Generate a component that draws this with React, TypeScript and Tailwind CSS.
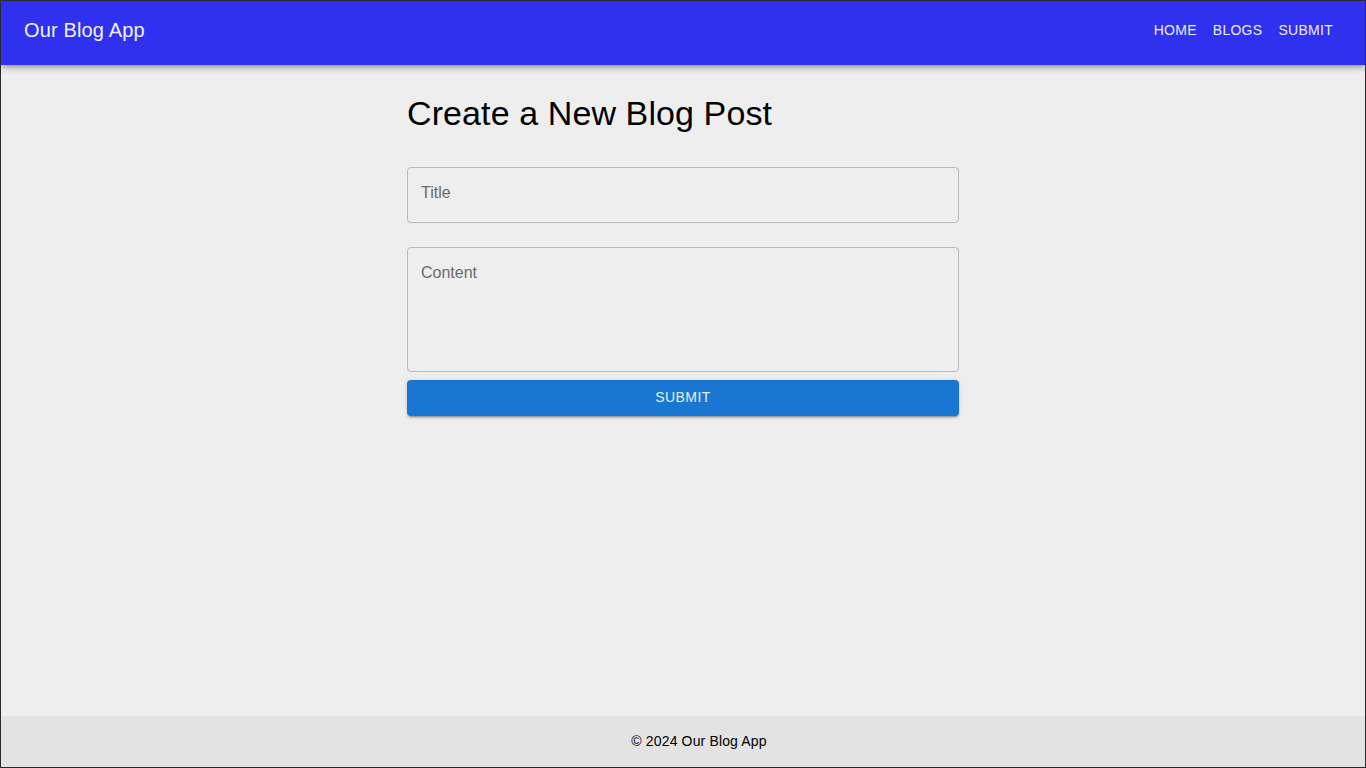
const navItems = ["Home", "Blogs", "Submit"];

const Header = () => {
  return (
    <header className="relative z-10 h-16 shrink-0 bg-[#3030ef] text-white shadow-[0_2px_4px_-1px_rgba(0,0,0,0.2),0_4px_5px_0_rgba(0,0,0,0.14),0_1px_10px_0_rgba(0,0,0,0.12)]">
      <nav className="flex h-full items-center justify-between pl-[23px] pr-6 pb-[6px]">
        <span className="text-[20px] leading-[32px] tracking-[0.0075em] text-[#f0f0ff]">Our Blog App</span>
        <ul className="flex items-center">
          {navItems.map((item) => (
            <li key={item}>
              <a href="#" className="block rounded px-2 py-[6px] text-[14px] leading-[24px] uppercase tracking-[0.02em] text-[#ececff]">
                {item}
              </a>
            </li>
          ))}
        </ul>
      </nav>
    </header>
  );
};

const NewPostForm = () => {
  return (
    <main className="flex-1">
      <div className="mx-auto w-[600px] px-6">
        <h1 className="mt-[27px] mb-[33px] text-[34px] leading-[42px] tracking-[0.1px] text-black">Create a New Blog Post</h1>
        <form className="flex flex-col" onSubmit={(e) => e.preventDefault()}>
          <input
            type="text"
            placeholder="Title"
            className="mb-2 h-[56px] rounded border border-[#b9b9b9] bg-transparent px-[13px] pb-[4px] text-[16px] text-black placeholder:text-[#6a6a6a] outline-none"
          />
          <textarea
            rows={4}
            placeholder="Content"
            className="mt-4 mb-2 h-[125px] resize-none rounded border border-[#b9b9b9] bg-transparent px-[13px] py-[13px] text-[16px] leading-[23px] text-black placeholder:text-[#6a6a6a] outline-none"
          />
          <button
            type="submit"
            className="h-9 rounded bg-[#1976d2] pb-[2px] text-[14px] uppercase tracking-[0.02857em] text-[#e8f0fa] shadow-[0_3px_1px_-2px_rgba(0,0,0,0.2),0_2px_2px_0_rgba(0,0,0,0.14),0_1px_5px_0_rgba(0,0,0,0.12)]"
          >
            Submit
          </button>
        </form>
      </div>
    </main>
  );
};

const Footer = () => {
  return (
    <footer className="flex h-[51px] shrink-0 items-center justify-center bg-[#e3e3e3] pl-8 text-[14px] tracking-[0.01071em] text-black">
      © 2024 Our Blog App
    </footer>
  );
};

export default function App() {
  return (
    <div className="flex h-screen flex-col overflow-hidden border border-[#2a2a2a] bg-[#eeeeee] font-['Liberation_Sans',Arial,sans-serif]">
      <Header />
      <NewPostForm />
      <Footer />
    </div>
  );
}
